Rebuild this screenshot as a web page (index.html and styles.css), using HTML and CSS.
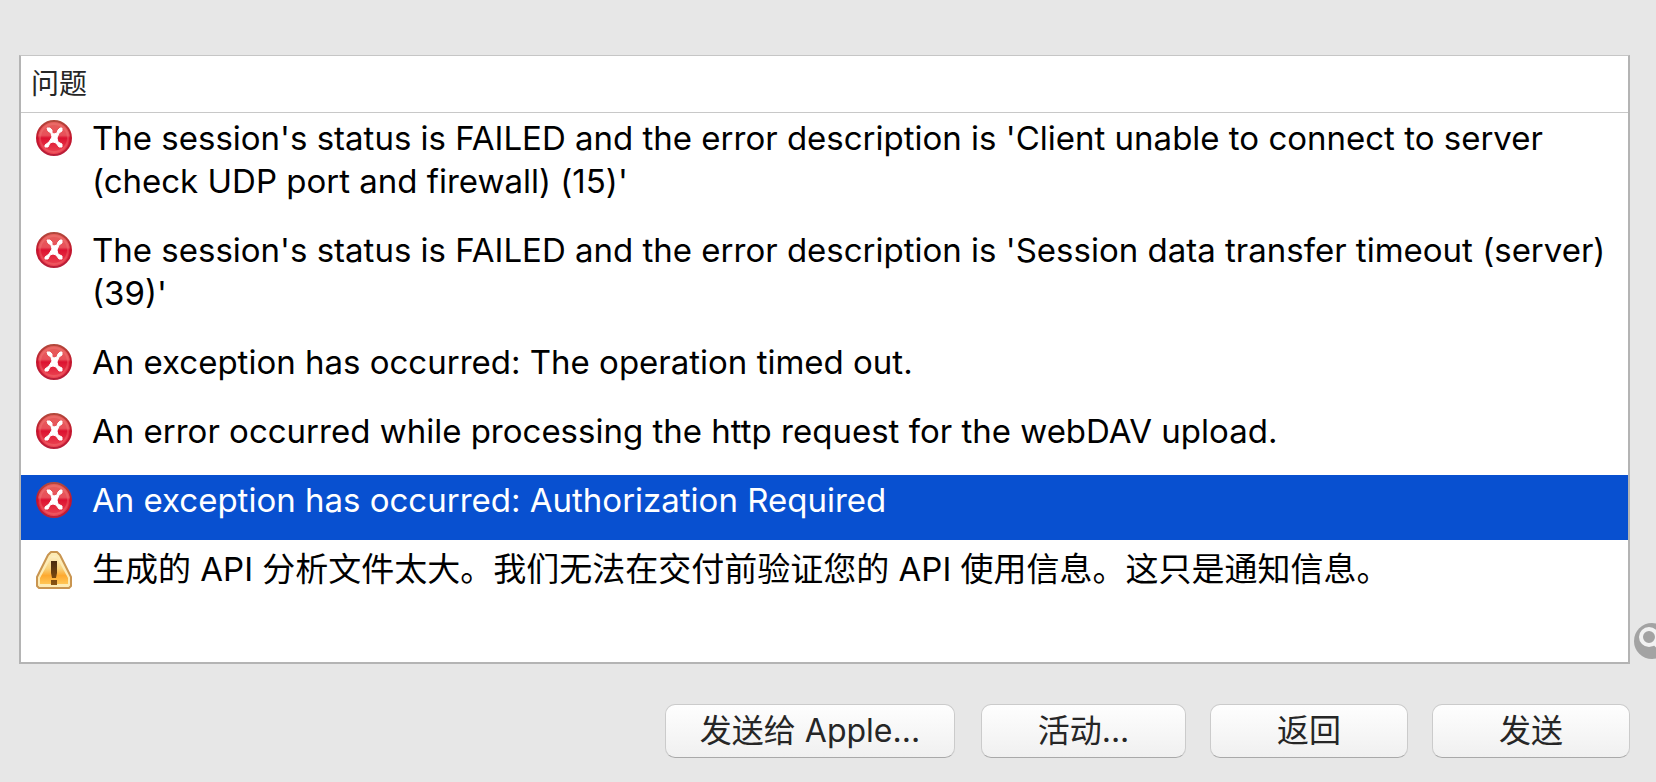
FILE: index.html
```html
<!DOCTYPE html>
<html lang="zh-CN">
<head>
    <meta charset="UTF-8">
    <meta name="viewport" content="width=device-width, initial-scale=1.0">
    <title>问题</title>
    <link rel="stylesheet" href="styles.css">
</head>
<body>
    <!-- Shared icons -->
    <svg class="icon-defs" aria-hidden="true">
        <defs>
            <linearGradient id="redFill" x1="0" y1="0" x2="0" y2="1">
                <stop offset="0" stop-color="#e5605a"/>
                <stop offset="0.42" stop-color="#e8505a"/>
                <stop offset="0.5" stop-color="#dc1230"/>
                <stop offset="1" stop-color="#ee4a56"/>
            </linearGradient>
            <linearGradient id="redEdge" x1="0" y1="0" x2="0" y2="1">
                <stop offset="0" stop-color="#b2493c"/>
                <stop offset="0.5" stop-color="#c4142c"/>
                <stop offset="1" stop-color="#b8203a"/>
            </linearGradient>
            <linearGradient id="amberFill" x1="0" y1="0" x2="0" y2="1">
                <stop offset="0" stop-color="#fdeec4"/>
                <stop offset="0.45" stop-color="#f8d078"/>
                <stop offset="0.7" stop-color="#fda92f"/>
                <stop offset="1" stop-color="#ffc656"/>
            </linearGradient>
            <linearGradient id="markFill" x1="0" y1="0" x2="0" y2="1">
                <stop offset="0" stop-color="#4a2a0c"/>
                <stop offset="1" stop-color="#8a5412"/>
            </linearGradient>
        </defs>
        <symbol id="icon-error" viewBox="0 0 36 36">
            <circle cx="18" cy="18" r="17" fill="url(#redFill)" stroke="url(#redEdge)" stroke-width="2"/>
            <circle cx="18" cy="18" r="14" fill="none" stroke="#f58a88" stroke-opacity="0.3" stroke-width="2"/>
            <path d="M11 8h3l2 2v3l2 1 3-1 1-3 2-2h2v3l-3 2-2 5 1 4 4 2v3h-3l-3-4-3-1-3 1-2 4h-3v-2l4-3 3-5-1-4-3-2z" fill="#fff" stroke="#fff" stroke-width="1"/>
        </symbol>
        <symbol id="icon-warning" viewBox="0 0 36 38">
            <path d="M15 1h6l3 3 11 22v9l-2 2H3l-2-2v-9L12 4z" fill="#fdebb4" stroke="#c99550" stroke-width="2" stroke-linejoin="round"/>
            <path d="M16 5h4l12 22v6H4v-6z" fill="url(#amberFill)"/>
            <path d="M15 10h6v12l-1 5h-4l-1-5zM15 29h6v5h-6z" fill="url(#markFill)"/>
        </symbol>
    </svg>

    <main class="issues">
        <div class="issues-list">
            <table class="issues-table">
                <thead>
                    <tr>
                        <th colspan="2" scope="col">问题</th>
                    </tr>
                </thead>
                <tbody>
                    <tr>
                        <td class="icon-cell"><svg class="icon" role="img" aria-label="错误"><use href="#icon-error"/></svg></td>
                        <td>The session's status is FAILED and the error description is 'Client unable to connect to server (check UDP port and firewall) (15)'</td>
                    </tr>
                    <tr>
                        <td class="icon-cell"><svg class="icon" role="img" aria-label="错误"><use href="#icon-error"/></svg></td>
                        <td>The session's status is FAILED and the error description is 'Session data transfer timeout (server) (39)'</td>
                    </tr>
                    <tr>
                        <td class="icon-cell"><svg class="icon" role="img" aria-label="错误"><use href="#icon-error"/></svg></td>
                        <td>An exception has occurred: The operation timed out.</td>
                    </tr>
                    <tr>
                        <td class="icon-cell"><svg class="icon" role="img" aria-label="错误"><use href="#icon-error"/></svg></td>
                        <td>An error occurred while processing the http request for the webDAV upload.</td>
                    </tr>
                    <tr class="selected">
                        <td class="icon-cell"><svg class="icon" role="img" aria-label="错误"><use href="#icon-error"/></svg></td>
                        <td>An exception has occurred: Authorization Required</td>
                    </tr>
                    <tr>
                        <td class="icon-cell"><svg class="icon icon-tall" role="img" aria-label="警告"><use href="#icon-warning"/></svg></td>
                        <td>生成的 API 分析文件太大。我们无法在交付前验证您的 API 使用信息。这只是通知信息。</td>
                    </tr>
                </tbody>
            </table>

            <button class="reveal-button" type="button" aria-label="显示">
                <svg viewBox="0 0 36 36" width="36" height="36" aria-hidden="true">
                    <circle cx="18" cy="18" r="18" fill="#a3a3a3"/>
                    <circle cx="15" cy="14" r="8" fill="#a3a3a3" stroke="#f2f2f2" stroke-width="4"/>
                    <path d="M21 20l8 8" stroke="#f2f2f2" stroke-width="5"/>
                </svg>
            </button>
        </div>

        <footer class="actions">
            <div class="report-actions">
                <button class="push-button wide" type="button">发送给 Apple...</button>
                <button class="push-button medium" type="button">活动...</button>
            </div>
            <button class="push-button" type="button">返回</button>
            <button class="push-button" type="button">发送</button>
        </footer>
    </main>
</body>
</html>
```
FILE: styles.css
```css
* {
    margin: 0;
    padding: 0;
    box-sizing: border-box;
}

body {
    font-family: Inter, "Noto Sans CJK SC", sans-serif;
    background-color: #e7e7e7;
    color: black;
    overflow-x: hidden;
}

.icon-defs {
    position: absolute;
    width: 0;
    height: 0;
}

.issues {
    display: flex;
    flex-direction: column;
    gap: 40px;
    min-height: 100vh;
    padding: 55px 26px 24px 19px;
}

/* Issue list */
.issues-list {
    position: relative;
    flex: 1;
    background-color: white;
    border: 2px solid #b4b4b4;
    border-top: 1px solid #c6c6c6;
}

.issues-table {
    width: 100%;
    border-collapse: separate;
    border-spacing: 0;
}

.issues-table th {
    height: 57px;
    padding-left: 10px;
    border-bottom: 1px solid #c8c8c8;
    color: #262626;
    font-size: 28px;
    font-weight: 400;
    line-height: 38px;
    text-align: left;
}

.issues-table td {
    padding: 4px 12px 18px 0;
    border-bottom: 4px solid white;
    font-size: 33px;
    line-height: 43px;
    vertical-align: top;
}

.issues-table .icon-cell {
    width: 71px;
    padding: 7px 0 0 15px;
}

.icon {
    display: block;
    width: 36px;
    height: 36px;
}

.icon-tall {
    height: 38px;
}

.selected td {
    background-color: #0850d0;
    background-clip: padding-box;
    color: white;
}

.reveal-button {
    position: absolute;
    left: 100%;
    bottom: 3px;
    width: 36px;
    height: 36px;
    margin-left: 6px;
    background: none;
    border: none;
}

.reveal-button svg {
    display: block;
}

/* Bottom buttons */
.actions {
    display: flex;
    justify-content: flex-end;
    gap: 24px;
}

.report-actions {
    display: flex;
    gap: 26px;
}

.push-button {
    width: 198px;
    height: 54px;
    background-image: linear-gradient(#fefefe, #f0f0f0);
    border: 1px solid #cbcbcb;
    border-bottom-color: #a9a9a9;
    border-radius: 10px;
    color: #262626;
    font-family: inherit;
    font-size: 32px;
    line-height: 40px;
}

.push-button.medium {
    width: 205px;
}

.push-button.wide {
    width: 290px;
}
```
